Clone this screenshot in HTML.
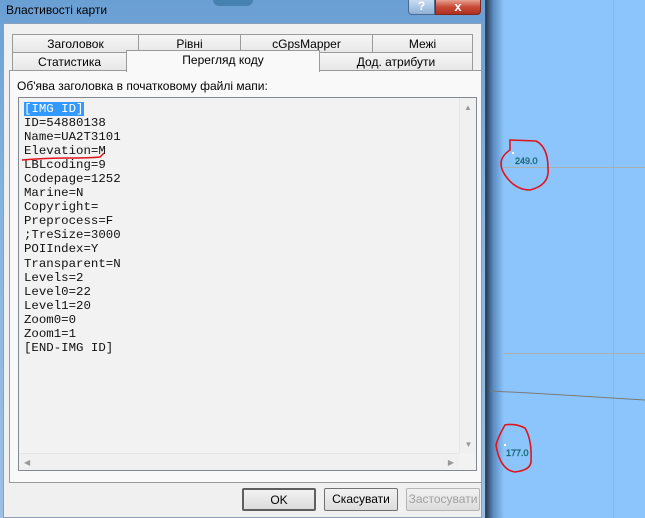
<!DOCTYPE html>
<html><head><meta charset="utf-8"><style>
*{margin:0;padding:0;box-sizing:border-box}
body{width:645px;height:518px;overflow:hidden;position:relative;background:#8cc5fb;font-family:"Liberation Sans",sans-serif;font-size:12px;color:#000}
.abs{position:absolute}
#frame{left:0;top:0;width:486px;height:518px;background:linear-gradient(180deg,#6a9fd4 0%,#86b4e0 40%,#9cc0e4 100%);border-right:1px solid #2b4a6e}
#shadow{left:486px;top:0;width:18px;height:518px;background:linear-gradient(90deg,#2a3d55,#5a8ac0 40%,#8cc5fb)}
#title{left:6px;top:3px;font-size:12px;color:#000}
#client{left:3px;top:23px;width:479px;height:495px;background:#f0f0f0;border:1px solid #8aa0b8}
.tab{position:absolute;height:19px;background:linear-gradient(#f6f6f6,#e6e6e6);border:1px solid #9a9a9a;border-bottom:none;text-align:center;line-height:18px;font-size:12px}
#panel{left:9px;top:70px;width:473px;height:413px;border:1px solid #9a9a9a;background:#f9f9f9}
#ta{left:18px;top:97px;width:459px;height:374px;border:1px solid #828790;background:#f2f2f2}
pre{position:absolute;left:5px;top:4px;font-family:"Liberation Mono",monospace;font-size:12.4px;line-height:14.05px;color:#111}
.sel{background:#3399ff;color:#fff}
.btn{position:absolute;top:488px;height:23px;border:1px solid #707070;border-radius:2px;background:linear-gradient(#f2f2f2,#dcdcdc);text-align:center;line-height:21px;font-size:12px}
.grid{position:absolute;background:#a9afb3}
</style></head><body>
<div id="frame" class="abs"></div>
<div id="shadow" class="abs"></div>
<div class="abs" style="left:213px;top:0;width:40px;height:6px;background:#2f6f9a;border-radius:0 0 20px 20px;opacity:.6"></div>
<div id="title" class="abs">Властивості карти</div>
<div class="abs" style="left:408px;top:0;width:27px;height:15px;border:1px solid #4a6a90;border-top:none;border-radius:0 0 0 4px;background:linear-gradient(#c8dcf0,#8fb0d6);color:#fff;font-weight:bold;text-align:center;font-size:12px;line-height:13px">?</div>
<div class="abs" style="left:435px;top:0;width:46px;height:15px;border:1px solid #7a2a20;border-top:none;border-radius:0 0 4px 0;background:linear-gradient(#e8a090,#c74a36 50%,#b0301f);color:#fff;font-weight:bold;text-align:center;font-size:13px;line-height:13px">x</div>
<div id="client" class="abs"></div>
<div class="tab" style="left:12px;top:34px;width:127px">Заголовок</div>
<div class="tab" style="left:138px;top:34px;width:103px">Рівні</div>
<div class="tab" style="left:240px;top:34px;width:133px">cGpsMapper</div>
<div class="tab" style="left:372px;top:34px;width:101px">Межі</div>
<div class="tab" style="left:12px;top:52px;width:115px">Статистика</div>
<div class="tab" style="left:319px;top:52px;width:154px">Дод. атрибути</div>
<div id="panel" class="abs"></div>
<div class="tab" style="left:126px;top:50px;width:194px;height:22px;background:#f9f9f9;z-index:2">Перегляд коду</div>
<div class="abs" style="left:17px;top:79px;font-size:12px">Об'ява заголовка в початковому файлі мапи:</div>
<div id="ta" class="abs">
<pre><span class="sel">[IMG ID]</span>
ID=54880138
Name=UA2T3101
Elevation=M
LBLcoding=9
Codepage=1252
Marine=N
Copyright=
Preprocess=F
;TreSize=3000
POIIndex=Y
Transparent=N
Levels=2
Level0=22
Level1=20
Zoom0=0
Zoom1=1
[END-IMG ID]</pre>
<div class="abs" style="right:0;top:0;width:17px;height:355px;background:#f0f0f0;border-left:1px solid #e6e6e6;color:#999;font-size:8px;text-align:center"><div style="margin-top:5px">▲</div><div style="position:absolute;bottom:4px;width:17px">▼</div></div>
<div class="abs" style="left:0;bottom:0;width:440px;height:17px;background:#f0f0f0;border-top:1px solid #e6e6e6;color:#999;font-size:8px;line-height:17px"><span style="margin-left:5px">◀</span><span style="position:absolute;right:5px">▶</span></div>
</div>
<div class="btn" style="left:242px;width:74px;border:2px solid #5f5f5f">OK</div>
<div class="btn" style="left:324px;width:74px">Скасувати</div>
<div class="btn" style="left:406px;width:74px;color:#a0a0a0;border-color:#b5b5b5">Застосувати</div>
<div class="grid" style="left:613px;top:0;width:1px;height:518px"></div>
<div class="grid" style="left:504px;top:167px;width:141px;height:1px"></div>
<div class="grid" style="left:504px;top:353px;width:141px;height:1px"></div>
<svg class="abs" style="left:0;top:0" width="645" height="518">
<path d="M22 160 Q45 158 70 158 Q90 158 100 157 L104 153" stroke="#e0141c" stroke-width="1.5" fill="none"/>
<path d="M490 391 L530 393 L580 396 L645 400" stroke="#7a7a7a" stroke-width="1" fill="none"/>
<path d="M510 140 L536 141 Q548 147 548 168 Q550 185 530 190 Q515 190 505 175 Q495 160 510 150 Z" stroke="#e0141c" stroke-width="1.6" fill="none"/>
<path d="M505 425 Q498 437 496 445 Q500 470 515 472 Q532 470 531 460 Q532 440 525 428 Q515 423 505 425 Z" stroke="#e0141c" stroke-width="1.6" fill="none"/>
<rect x="512" y="152" width="2" height="2" fill="#fff"/>
<rect x="504" y="444" width="2" height="2" fill="#fff"/>
<text x="515" y="164" font-family="Liberation Sans" font-size="9" fill="#1aa0a0" stroke="#0a3040" stroke-width="0.3">249.0</text>
<text x="506" y="456" font-family="Liberation Sans" font-size="9" fill="#1aa0a0" stroke="#0a3040" stroke-width="0.3">177.0</text>
</svg>
</body></html>
